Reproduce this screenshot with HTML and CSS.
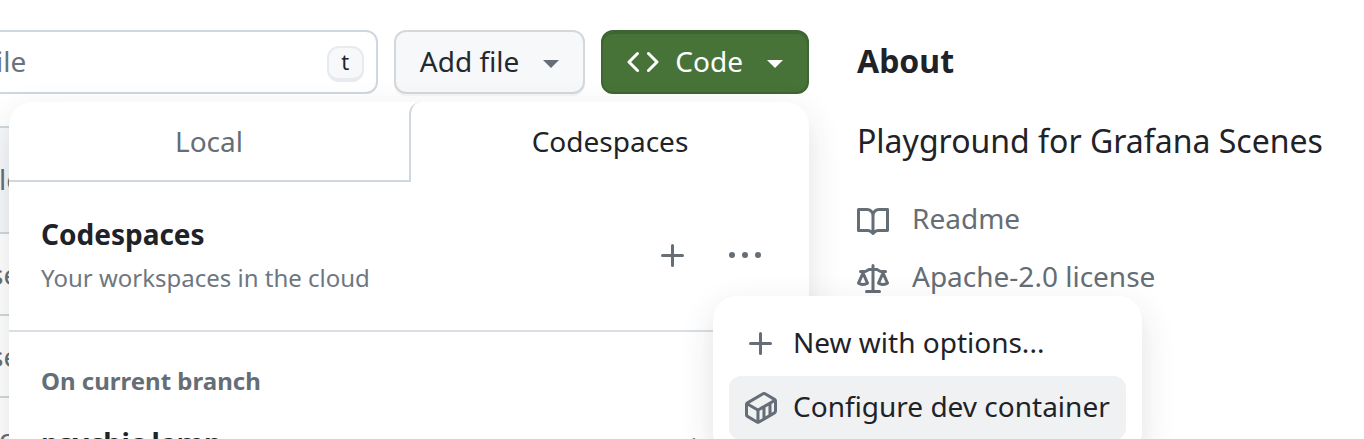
FILE: index.html
```
<!DOCTYPE html>
<html lang="en">
<head>
<meta charset="utf-8">
<title>Code menu</title>
<link rel="stylesheet" href="styles.css">
</head>
<body>
<div class="page">
  <main class="files">
    <div class="toolbar">
      <div class="search">
        <input class="search-input" type="text" placeholder="ile" aria-label="Find a file">
        <kbd class="key">t</kbd>
      </div>
      <button class="btn" type="button">
        <span class="btn-label">Add file</span>
        <svg class="caret" viewBox="0 0 16 8" aria-hidden="true"><path d="M0 0h16L8 8z"/></svg>
      </button>
      <button class="btn btn-primary" type="button">
        <svg class="icon" viewBox="0 0 16 16" aria-hidden="true"><path d="m11.28 3.22 4.25 4.25a.75.75 0 0 1 0 1.06l-4.25 4.25a.749.749 0 0 1-1.275-.326.749.749 0 0 1 .215-.734L13.94 8l-3.72-3.72a.749.749 0 0 1 .326-1.275.749.749 0 0 1 .734.215Zm-6.56 0a.751.751 0 0 1 1.042.018.751.751 0 0 1 .018 1.042L2.06 8l3.72 3.72a.749.749 0 0 1-.326 1.275.749.749 0 0 1-.734-.215L.47 8.53a.75.75 0 0 1 0-1.06Z"/></svg>
        <span class="btn-label">Code</span>
        <svg class="caret" viewBox="0 0 16 8" aria-hidden="true"><path d="M0 0h16L8 8z"/></svg>
      </button>
    </div>
    <div class="listing">
      <div class="listing-head">le</div>
      <div class="listing-row">se</div>
      <div class="listing-row">se</div>
      <div class="listing-row listing-short">c</div>
    </div>

    <section class="popover" aria-label="Codespaces">
      <div class="tabs" role="tablist">
        <button class="tab" type="button" role="tab" aria-selected="false">Local</button>
        <button class="tab tab-active" type="button" role="tab" aria-selected="true">Codespaces</button>
      </div>
      <div class="intro">
        <div class="intro-text">
          <h2 class="intro-title">Codespaces</h2>
          <p class="intro-sub">Your workspaces in the cloud</p>
        </div>
        <button class="icon-btn" type="button" aria-label="Create a codespace">
          <svg class="icon" viewBox="0 0 16 16" aria-hidden="true"><path d="M7.75 2a.75.75 0 0 1 .75.75V7h4.25a.75.75 0 0 1 0 1.5H8.5v4.25a.75.75 0 0 1-1.5 0V8.5H2.75a.75.75 0 0 1 0-1.5H7V2.75A.75.75 0 0 1 7.75 2Z"/></svg>
        </button>
        <button class="icon-btn" type="button" aria-label="More options">
          <svg class="icon" viewBox="0 0 16 16" aria-hidden="true"><path d="M8 9a1.5 1.5 0 1 0 0-3 1.5 1.5 0 0 0 0 3ZM1.5 9a1.5 1.5 0 1 0 0-3 1.5 1.5 0 0 0 0 3Zm13 0a1.5 1.5 0 1 0 0-3 1.5 1.5 0 0 0 0 3Z"/></svg>
        </button>
      </div>
      <div class="branch">
        <h3 class="branch-title">On current branch</h3>
        <div class="space">
          <a class="space-name" href="#">psychic lamp</a>
          <span class="space-state">active</span>
        </div>
      </div>

      <div class="menu" role="menu">
        <button class="menu-item" type="button" role="menuitem">
          <svg class="icon" viewBox="0 0 16 16" aria-hidden="true"><path d="M7.75 2a.75.75 0 0 1 .75.75V7h4.25a.75.75 0 0 1 0 1.5H8.5v4.25a.75.75 0 0 1-1.5 0V8.5H2.75a.75.75 0 0 1 0-1.5H7V2.75A.75.75 0 0 1 7.75 2Z"/></svg>
          <span class="menu-label">New with options...</span>
        </button>
        <button class="menu-item menu-item-hover" type="button" role="menuitem">
          <svg class="icon" viewBox="0 0 16 16" aria-hidden="true"><path d="m10.41.24 4.711 2.774c.544.316.878.897.879 1.526v5.01a1.77 1.77 0 0 1-.88 1.53l-7.753 4.521-.002.001a1.769 1.769 0 0 1-1.774 0H5.59L.873 12.85A1.762 1.762 0 0 1 0 11.327V6.292c0-.304.078-.598.22-.855l.004-.005.01-.019c.15-.262.369-.486.64-.643L8.641.239a1.752 1.752 0 0 1 1.765 0l.002.001ZM9.397 1.534l-7.17 4.182 4.116 2.388a.27.27 0 0 0 .269 0l7.152-4.148-4.115-2.422a.25.25 0 0 0-.252 0Zm-7.768 10.02 4.1 2.393V9.474a1.807 1.807 0 0 1-.138-.072L1.5 7.029v4.298c0 .095.05.181.129.227Zm8.6.642 1.521-.887v-4.45l-1.521.882ZM7.365 9.402h.001c-.044.026-.09.049-.136.071v4.472l1.5-.875V8.61Zm5.885 1.032 1.115-.65h.002a.267.267 0 0 0 .133-.232V5.264l-1.25.725Z"/></svg>
          <span class="menu-label">Configure dev container</span>
        </button>
      </div>
    </section>
  </main>

  <aside class="about">
    <h2 class="about-title">About</h2>
    <p class="about-text">Playground for Grafana Scenes</p>
    <a class="about-link" href="#">
      <svg class="icon" viewBox="0 0 16 16" aria-hidden="true"><path d="M0 1.75A.75.75 0 0 1 .75 1h4.253c1.227 0 2.317.59 3 1.501A3.743 3.743 0 0 1 11.006 1h4.245a.75.75 0 0 1 .75.75v10.5a.75.75 0 0 1-.75.75h-4.507a2.25 2.25 0 0 0-1.591.659l-.622.621a.75.75 0 0 1-1.06 0l-.622-.621A2.25 2.25 0 0 0 5.258 13H.75a.75.75 0 0 1-.75-.75Zm7.251 10.324.004-5.073-.002-2.253A2.25 2.25 0 0 0 5.003 2.5H1.5v9h3.757a3.75 3.75 0 0 1 1.994.574ZM8.755 4.75l-.004 7.322a3.752 3.752 0 0 1 1.992-.572H14.5v-9h-3.495a2.25 2.25 0 0 0-2.25 2.25Z"/></svg>
      <span>Readme</span>
    </a>
    <a class="about-link" href="#">
      <svg class="icon" viewBox="0 0 16 16" aria-hidden="true"><path d="M8.75.75V2h.985c.304 0 .603.08.867.231l1.29.736c.038.022.08.033.124.033h2.234a.75.75 0 0 1 0 1.5h-.427l2.111 4.692a.75.75 0 0 1-.154.838l-.53-.53.529.531-.001.002-.002.002-.006.006-.006.005-.01.01-.045.04c-.21.176-.441.327-.686.45C14.556 10.78 13.88 11 13 11a4.498 4.498 0 0 1-2.023-.454 3.544 3.544 0 0 1-.686-.45l-.045-.04-.016-.015-.006-.006-.004-.004v-.001a.75.75 0 0 1-.154-.838L12.178 4.5h-.162c-.305 0-.604-.079-.868-.231l-1.29-.736a.245.245 0 0 0-.124-.033H8.75V13h2.5a.75.75 0 0 1 0 1.5h-6.5a.75.75 0 0 1 0-1.5h2.5V3.5h-.984a.245.245 0 0 0-.124.033l-1.289.737c-.265.15-.564.23-.869.23h-.162l2.112 4.692a.75.75 0 0 1-.154.838l-.53-.53.529.531-.001.002-.002.002-.006.006-.016.015-.045.04c-.21.176-.441.327-.686.45C4.556 10.78 3.88 11 3 11a4.498 4.498 0 0 1-2.023-.454 3.544 3.544 0 0 1-.686-.45l-.045-.04-.016-.015-.006-.006-.004-.004v-.001a.75.75 0 0 1-.154-.838L2.178 4.5H1.75a.75.75 0 0 1 0-1.5h2.234a.249.249 0 0 0 .125-.033l1.288-.737c.265-.15.564-.23.869-.23h.984V.75a.75.75 0 0 1 1.5 0Zm2.945 8.477c.285.135.718.273 1.305.273s1.02-.138 1.305-.273L13 6.327Zm-10 0c.285.135.718.273 1.305.273s1.02-.138 1.305-.273L3 6.327Z"/></svg>
      <span>Apache-2.0 license</span>
    </a>
  </aside>
</div>
</body>
</html>
```
FILE: styles.css
```
* {
  box-sizing: border-box;
}

html {
  overflow: hidden;
}

body {
  max-height: 100vh;
  margin: 0;
  overflow: hidden;
  background: #fff;
  color: #1f2328;
  font: 28px/42px "Noto Sans", sans-serif;
}

h2, h3, p {
  margin: 0;
}

button, input {
  font: inherit;
  color: inherit;
}

a {
  color: inherit;
  text-decoration: none;
}

.icon {
  flex: none;
  width: 32px;
  height: 32px;
  fill: currentColor;
}

.page {
  display: grid;
  grid-template-columns: minmax(0, 1fr) 483px;
  gap: 48px;
  margin-left: -32px;
  padding: 30px 24px 0 0;
}

.files {
  position: relative;
}

.toolbar {
  display: flex;
  gap: 16px;
  margin-bottom: 32px;
}

.search {
  display: flex;
  align-items: center;
  flex: 1;
  min-width: 0;
  height: 64px;
  padding: 0 12px 0 26px;
  border: 2px solid #d0d7de;
  border-radius: 12px;
}

.search-input {
  flex: 1;
  min-width: 0;
  padding: 0 0 2px;
  border: 0;
  outline: 0;
  background: none;
}

.search-input::placeholder {
  color: #6a737c;
  opacity: 1;
}

.key {
  width: 37px;
  height: 36px;
  margin-top: 4px;
  border: 2px solid #e8eaee;
  border-bottom-width: 4px;
  border-radius: 12px;
  background: #f6f8fa;
  font: 22px/26px "Noto Sans", sans-serif;
  text-align: center;
}

.btn {
  display: flex;
  align-items: center;
  gap: 24px;
  height: 64px;
  padding: 0 24px;
  border: 2px solid #d5d8db;
  border-radius: 12px;
  background: #f6f8fa;
  color: #25292e;
  box-shadow: 0 2px 0 rgba(31, 35, 40, 0.04);
}

.btn-label {
  padding-bottom: 2px;
}

.btn-primary {
  gap: 16px;
  border-color: #3e6632;
  background: #487338;
  color: #fff;
  box-shadow: inset 0 2px 0 #3e6632;
}

.btn-primary .caret {
  margin-left: 8px;
  fill: #fff;
}

.caret {
  width: 16px;
  height: 8px;
  margin-top: 4px;
  fill: #656d76;
}

.listing {
  border: 2px solid #d0d7de;
  border-radius: 12px;
  color: #656d76;
}

.listing-head {
  padding: 30px 32px 32px 29px;
  border-radius: 12px 12px 0 0;
  background: #f6f8fa;
}

.listing-row {
  padding: 19px 20px;
  border-top: 2px solid #d0d7de;
}

.listing-short {
  padding-left: 29px;
}

.popover {
  position: absolute;
  top: 72px;
  right: 0;
  width: 800px;
  border-radius: 24px;
  background: #fff;
  box-shadow: 0 12px 24px -6px rgba(37, 41, 46, 0.04), 0 12px 36px 0 rgba(37, 41, 46, 0.12);
}

.tabs {
  display: grid;
  grid-template-columns: 1fr 1fr;
}

.tab {
  height: 80px;
  padding: 0;
  border: 0 solid #d0d7de;
  border-bottom-width: 2px;
  background: none;
  color: #656d76;
}

.tab-active {
  padding-bottom: 2px;
  border-width: 0 0 0 2px;
  border-top-left-radius: 12px;
  color: #1f2328;
}

.intro {
  display: flex;
  align-items: center;
  padding: 32px 28px 32px 32px;
  border-bottom: 2px solid #d8dee4;
}

.intro-text {
  display: grid;
  flex: 1;
  gap: 4px;
}

.intro-title {
  font-size: 28px;
  line-height: 40px;
}

.intro-sub {
  color: #6e7781;
  font-size: 24px;
  line-height: 40px;
}

.icon-btn {
  display: flex;
  padding: 16px 20px;
  border: 0;
  background: none;
  color: #656d76;
}

.branch {
  padding: 32px;
}

.branch-title {
  margin-bottom: 24px;
  color: #656d76;
  font-size: 24px;
  line-height: 34px;
}

.space {
  display: flex;
  align-items: flex-start;
  justify-content: space-between;
}

.space-name {
  font-weight: 700;
}

.space-state {
  width: 120px;
  padding-top: 4px;
  color: #656d76;
  font-size: 24px;
}

.menu {
  position: absolute;
  top: 194px;
  left: 704px;
  padding: 16px;
  border-radius: 24px;
  background: #fff;
  box-shadow: 0 12px 24px -6px rgba(37, 41, 46, 0.04), 0 12px 36px 0 rgba(37, 41, 46, 0.12);
}

.menu-item {
  display: flex;
  align-items: center;
  gap: 16px;
  width: 100%;
  height: 64px;
  padding: 0 16px;
  border: 0;
  border-radius: 12px;
  background: none;
  white-space: nowrap;
}

.menu-item .icon {
  color: #656d76;
}

.menu-label {
  padding-bottom: 4px;
}

.menu-item-hover {
  background: #eff1f3;
}

.about-title {
  margin-bottom: 26px;
  font-size: 32px;
  line-height: 62px;
}

.about-text {
  margin-bottom: 33px;
  font-size: 32px;
  line-height: 46px;
}

.about-link {
  display: flex;
  align-items: center;
  gap: 23px;
  margin-bottom: 16px;
  color: #656d76;
}

.about-link .icon {
  margin-top: 8px;
}
```
